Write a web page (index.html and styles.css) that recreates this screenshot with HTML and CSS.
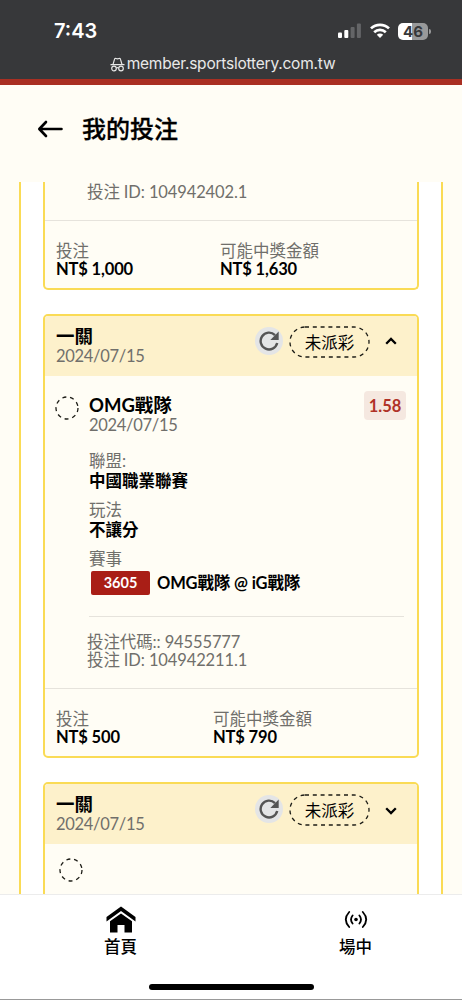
FILE: index.html
```html
<!DOCTYPE html>
<html lang="zh-TW">
<head>
    <meta charset="UTF-8">
    <meta name="viewport" content="width=device-width, initial-scale=1.0">
    <title>我的投注</title>
    <link rel="stylesheet" href="styles.css">
</head>
<body>
    <div class="page">
        <!-- 狀態列 -->
        <div class="browser-bar">
            <div class="status">
                <span class="time">7:43</span>
                <div class="status-icons">
                    <svg width="23" height="16" viewBox="0 0 23 16">
                        <rect x="0" y="9.5" width="4" height="5.5" rx="1" fill="#fff"/>
                        <rect x="6.3" y="7" width="4" height="8" rx="1" fill="#fff"/>
                        <rect x="12.6" y="4" width="4" height="11" rx="1" fill="#646567"/>
                        <rect x="18.9" y="0.5" width="4" height="14.5" rx="1" fill="#646567"/>
                    </svg>
                    <svg class="wifi" width="20" height="16" viewBox="0 0 20 16" fill="none" stroke="#fff" stroke-width="2.7">
                        <path d="M1 5.4a13 13 0 0 1 18 0"/>
                        <path d="M4.2 9.2a8.5 8.5 0 0 1 11.6 0"/>
                        <path d="M10 15l-3.2-3.2a4.6 4.6 0 0 1 6.4 0z" fill="#fff" stroke="none"/>
                    </svg>
                    <span class="battery">46</span>
                    <span class="battery-tip"></span>
                </div>
            </div>
            <div class="url">
                <svg width="15" height="15" viewBox="0 0 15 15" fill="none" stroke="#e8e8e8" stroke-width="1.2">
                    <path d="M0.5 7.6h14M3 7.4l1.5-5q.3-1.2 1.4-.9l1.6.4 1.6-.4q1.1-.3 1.4.9l1.500 5"/>
                    <circle cx="4" cy="11.5" r="2.3"/>
                    <circle cx="11" cy="11.5" r="2.3"/>
                    <path d="M6.3 11q1.200-.8 2.400 0"/>
                </svg>
                <span>member.sportslottery.com.tw</span>
            </div>
        </div>

        <header class="header">
            <svg width="26" height="18" viewBox="0 0 26 18" fill="none" stroke="#000" stroke-width="2.6" stroke-linecap="round" stroke-linejoin="round">
                <path d="M24.500 9H2.500M9 2L2.300 9l6.700 7"/>
            </svg>
            <h1>我的投注</h1>
        </header>

        <!-- 投注列表 -->
        <main class="list">
            <section class="card card-first">
                <div class="codes">
                    <p>投注 ID: 104942402.1</p>
                </div>
                <div class="card-foot">
                    <div class="stake wide">
                        <p>投注</p>
                        <strong>NT$ 1,000</strong>
                    </div>
                    <div>
                        <p>可能中獎金額</p>
                        <strong>NT$ 1,630</strong>
                    </div>
                </div>
            </section>

            <section class="card">
                <div class="card-head">
                    <div class="card-title">
                        <h2>一關</h2>
                        <p class="date">2024/07/15</p>
                    </div>
                    <span class="refresh">
                        <svg width="20" height="20" viewBox="0 0 20 20" fill="none" stroke="#555" stroke-width="2.4">
                            <path d="M18.2 12A8.4 8.4 0 1 1 16 4.1"/>
                            <path d="M19.7.6v8.4h-8.4z" fill="#555" stroke="none"/>
                        </svg>
                    </span>
                    <span class="status-tag">
                        <svg width="81" height="32" viewBox="0 0 81 32"><rect x="1" y="1" width="79" height="30" rx="15"/></svg>
                        <span>未派彩</span>
                    </span>
                    <svg class="arrow" width="12" height="8" viewBox="0 0 12 8"><path d="M1.2 6.8L6 2l4.8 4.8"/></svg>
                </div>
                <div class="pick">
                    <svg class="ring" width="24" height="24" viewBox="0 0 24 24"><circle cx="12" cy="12" r="11"/></svg>
                    <div class="pick-main">
                        <div class="pick-top">
                            <div>
                                <h3>OMG戰隊</h3>
                                <p class="date">2024/07/15</p>
                            </div>
                            <span class="odds">1.58</span>
                        </div>
                        <div class="info">
                            <p>聯盟:</p>
                            <strong>中國職業聯賽</strong>
                        </div>
                        <div class="info">
                            <p>玩法</p>
                            <strong>不讓分</strong>
                        </div>
                        <div class="info">
                            <p>賽事</p>
                            <div class="match">
                                <span class="match-no">3605</span>
                                <strong>OMG戰隊 @ iG戰隊</strong>
                            </div>
                        </div>
                    </div>
                </div>
                <div class="codes">
                    <p>投注代碼:: 94555777</p>
                    <p>投注 ID: 104942211.1</p>
                </div>
                <div class="card-foot">
                    <div class="stake">
                        <p>投注</p>
                        <strong>NT$ 500</strong>
                    </div>
                    <div>
                        <p>可能中獎金額</p>
                        <strong>NT$ 790</strong>
                    </div>
                </div>
            </section>

            <section class="card">
                <div class="card-head">
                    <div class="card-title">
                        <h2>一關</h2>
                        <p class="date">2024/07/15</p>
                    </div>
                    <span class="refresh">
                        <svg width="20" height="20" viewBox="0 0 20 20" fill="none" stroke="#555" stroke-width="2.4">
                            <path d="M18.2 12A8.4 8.4 0 1 1 16 4.1"/>
                            <path d="M19.7.6v8.4h-8.4z" fill="#555" stroke="none"/>
                        </svg>
                    </span>
                    <span class="status-tag">
                        <svg width="81" height="32" viewBox="0 0 81 32"><rect x="1" y="1" width="79" height="30" rx="15"/></svg>
                        <span>未派彩</span>
                    </span>
                    <svg class="arrow down" width="12" height="8" viewBox="0 0 12 8"><path d="M1.2 1.2L6 6l4.8-4.8"/></svg>
                </div>
                <div class="pick closed">
                    <svg class="ring" width="24" height="24" viewBox="0 0 24 24"><circle cx="12" cy="12" r="11"/></svg>
                </div>
            </section>
        </main>

        <!-- 底部選單 -->
        <nav class="tabs">
            <div class="tab-row">
                <a class="tab">
                    <svg width="30" height="27" viewBox="0 0 30 27">
                        <path d="M15 .5L29.5 11v4.5L15 5 .5 15.500V11z"/>
                        <path d="M15 7.500l11 7.700V26.500h-7.500v-7.500h-7v7.500H4V15.200z"/>
                    </svg>
                    <span>首頁</span>
                </a>
                <a class="tab">
                    <svg width="24" height="27" viewBox="0 0 24 27" fill="none" stroke="#000" stroke-width="1.8" stroke-linecap="round">
                        <circle cx="12" cy="13.500" r="1.800" fill="#000" stroke="none"/>
                        <path d="M8.600 9.500q-3.200 4 0 8M15.400 9.500q3.200 4 0 8M5.200 6q-6.800 7.500 0 15M18.800 6q6.800 7.500 0 15"/>
                    </svg>
                    <span>場中</span>
                </a>
            </div>
            <div class="home-bar"></div>
        </nav>
    </div>
</body>
</html>
```
FILE: styles.css
```css
* {
    box-sizing: border-box;
}
body {
    margin: 0;
    font-family: Lato, "Noto Sans CJK TC", sans-serif;
    font-size: 16.5px;
    line-height: 20px;
    color: #000;
    background-color: #fffdf5;
}
h1, h2, h3, p {
    margin: 0;
}
p {
    color: #706f6b;
}
strong {
    display: block;
}
svg {
    display: block;
    flex: none;
}
.page {
    display: flex;
    flex-direction: column;
    height: 1000px;
    overflow: hidden;
}

/* 瀏覽器頂部 */
.browser-bar {
    flex: none;
    height: 85px;
    padding-top: 20px;
    background-color: #37383a;
    border-bottom: 6px solid #a92f22;
    font-family: Inter, "Liberation Sans", sans-serif;
    color: #fff;
}
.status {
    display: flex;
    justify-content: space-between;
    align-items: center;
    height: 22px;
    padding: 0 31px 0 54px;
}
.time {
    font-size: 20px;
    font-weight: 600;
}
.status-icons {
    display: flex;
    align-items: center;
}
.wifi {
    margin: 0 8px 0 9px;
}
.battery {
    width: 30px;
    height: 17px;
    border-radius: 5px;
    background: linear-gradient(90deg, #fff 47%, #98999a 47%);
    color: #37383a;
    font-size: 15px;
    font-weight: 700;
    line-height: 17px;
    text-align: center;
}
.battery-tip {
    width: 2px;
    height: 5px;
    margin-left: 1px;
    border-radius: 0 2px 2px 0;
    background-color: #98999a;
}
.url {
    display: flex;
    justify-content: center;
    align-items: center;
    gap: 2px;
    margin-top: 12px;
    padding-right: 17px;
    font-size: 15.5px;
    letter-spacing: -0.22px;
    color: #e8e8e8;
}

/* 標題 */
.header {
    display: flex;
    flex: none;
    align-items: center;
    height: 97px;
    padding: 0 37px 10px;
    gap: 19px;
}
.header h1 {
    font-size: 24px;
    font-weight: 500;
    line-height: 30px;
    -webkit-text-stroke: 0.3px #000;
}

/* 列表 */
.list {
    flex: 1;
    min-height: 0;
    overflow: hidden;
    margin: 0 19px;
    padding: 0 22px;
    border: solid #fadb55;
    border-width: 0 2px;
    background-color: #fff;
}
.card {
    margin-bottom: 24px;
    border: 2px solid #fadb55;
    border-radius: 5px;
    background-color: #fffdf5;
}
.card-first {
    border-top: 0;
    border-radius: 0 0 5px 5px;
}
.card-head {
    display: flex;
    align-items: center;
    height: 60px;
    padding: 0 20px 8px 11px;
    background-color: #fdf1cb;
    border-radius: 3px 3px 0 0;
}
.card-title {
    flex: 1;
    padding-top: 7px;
}
.card-title h2 {
    font-size: 18.5px;
    font-weight: 700;
    line-height: 20px;
}
.date {
    letter-spacing: -0.3px;
}
.refresh {
    display: flex;
    justify-content: center;
    align-items: center;
    width: 28px;
    height: 28px;
    margin: -2px 6px 0 0;
    border-radius: 50%;
    background-color: #e4e5e6;
}
.status-tag {
    display: grid;
    place-items: center;
    margin-right: 15px;
}
.status-tag > * {
    grid-area: 1 / 1;
}
.status-tag span {
    padding-top: 1px;
}
.status-tag rect, .ring circle {
    fill: none;
    stroke: #1c1c16;
    stroke-width: 1.3;
    stroke-dasharray: 4 3.8;
}
.arrow {
    margin-top: -2px;
    fill: none;
    stroke: #000;
    stroke-width: 2.3;
}
.arrow.down {
    margin-top: 2px;
}

/* 投注內容 */
.pick {
    display: flex;
    align-items: flex-start;
    gap: 10px;
    padding: 19px 13px 0 10px;
}
.pick.closed {
    height: 80px;
    padding: 13px 0 0 14px;
}
.ring {
    margin-top: 1px;
}
.pick-main {
    flex: 1;
    height: 222px;
    border-bottom: 1px solid #e6e3dc;
}
.pick-top {
    display: flex;
    justify-content: space-between;
    margin-bottom: 16px;
}
h3 {
    font-size: 18.5px;
    font-weight: 700;
    line-height: 20px;
}
.odds {
    width: 42px;
    height: 29px;
    margin: -4px -2px 0 0;
    border-radius: 4px;
    background-color: #f5e8e0;
    color: #b03227;
    font-weight: 700;
    line-height: 31px;
    text-align: center;
}
.info {
    margin-bottom: 9px;
}
.info strong, .card-foot strong {
    letter-spacing: -0.15px;
}
.info > strong {
    letter-spacing: 0;
}
.match {
    display: flex;
    align-items: center;
    gap: 7px;
    margin: 2px 0 0 2px;
}
.match-no {
    width: 59px;
    height: 24px;
    border-radius: 2px;
    background-color: #a91e16;
    color: #fff;
    font-size: 14.5px;
    font-weight: 700;
    line-height: 24px;
    text-align: center;
}
.codes {
    padding: 16px 42px 19px;
    line-height: 18px;
    letter-spacing: -0.12px;
    border-bottom: 1px solid #e6e3dc;
}
.card-first .codes {
    padding-top: 1px;
}
.card-foot {
    display: flex;
    padding: 21px 11px 10px;
    line-height: 18px;
}
.stake {
    width: 157px;
}
.stake.wide {
    width: 164px;
}

/* 底部 */
.tabs {
    flex: none;
    height: 106px;
    padding-top: 11px;
    border-top: 1px solid #ececec;
    border-bottom: 1px solid #999;
    background-color: #fff;
}
.tab-row {
    display: flex;
    padding-left: 3px;
}
.tab {
    display: flex;
    flex: none;
    flex-direction: column;
    align-items: center;
    gap: 4px;
    width: 235px;
    font-weight: 500;
}
.home-bar {
    width: 165px;
    height: 6px;
    margin: 27px auto 0;
    border-radius: 3px;
    background-color: #000;
}
```
